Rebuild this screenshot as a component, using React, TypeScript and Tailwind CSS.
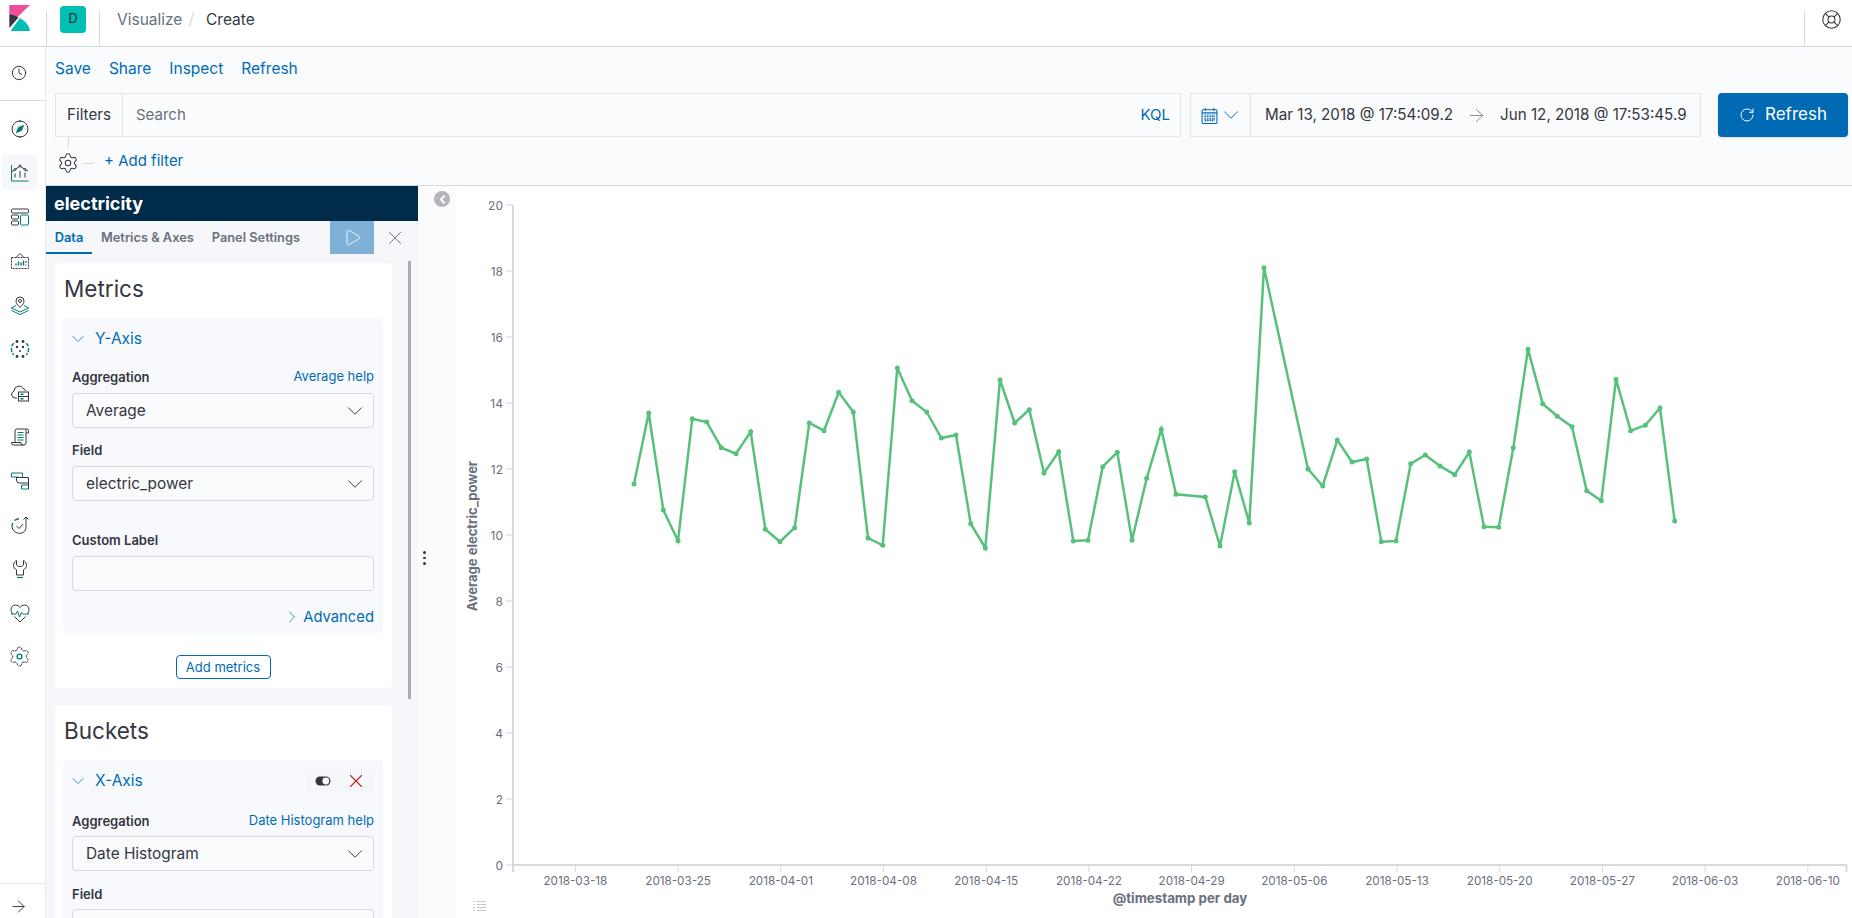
import React from "react";
import { ChevronDown, ChevronRight, ArrowRight, RotateCw, X, Play, LifeBuoy, Clock, ChevronLeft } from "lucide-react";

const D = "#343741";
const T = "#017d73";

const I = ({ children, vb = "0 0 20 20" }: { children: React.ReactNode; vb?: string }) => (
  <svg width="20" height="20" viewBox={vb} fill="none" stroke={D} strokeWidth="1">{children}</svg>
);

const gear = "M9.671 4.136a2.34 2.34 0 0 1 4.659 0 2.34 2.34 0 0 0 3.319 1.915 2.34 2.34 0 0 1 2.33 4.033 2.34 2.34 0 0 0 0 3.831 2.34 2.34 0 0 1-2.33 4.033 2.34 2.34 0 0 0-3.319 1.915 2.34 2.34 0 0 1-4.659 0 2.34 2.34 0 0 0-3.32-1.915 2.34 2.34 0 0 1-2.33-4.033 2.34 2.34 0 0 0 0-3.831A2.34 2.34 0 0 1 6.35 6.051a2.34 2.34 0 0 0 3.319-1.915";

const navIcons: React.ReactNode[] = [
  <I key="d"><circle cx="10" cy="10" r="8" /><path d="M13.5 6.5 11.5 11.5 6.5 13.5 8.5 8.5Z" fill={T} stroke={T} /><path d="M10 1v2M10 17v2" /></I>,
  <I key="v"><path d="M1.5 2v16h17" stroke={T} /><path d="M5 14.5v-4M10 14.5V8M15 14.5v-5" /><path d="M1.5 9 5 6.5 10 3l5 3.5 3 1.5" /><circle cx="10" cy="3" r="1" fill="#f5f7fa" /><circle cx="5" cy="6.5" r="1" fill="#f5f7fa" /><circle cx="15" cy="6.5" r="1" fill="#f5f7fa" /></I>,
  <I key="b"><rect x="1.5" y="2" width="17" height="4" rx="1" /><rect x="1.5" y="8" width="7" height="4" rx="1" /><rect x="1.5" y="14" width="7" height="4" rx="1" /><rect x="10.5" y="8" width="8" height="10" rx="1" stroke={T} /></I>,
  <I key="c"><path d="M1.5 6.5h17v11h-17z" strokeDasharray="2 1" /><path d="M6 6.5 10 2.5l4 4" /><path d="M6 14.5v-2M8.500 14.500v-4M11 14.500v-3M13.500 14.500v-5" stroke={T} strokeWidth="1.400" /><path d="M16 14.500v-1M16 12v-2" /></I>,
  <I key="m"><path d="M10 12.500C7 9.500 6 8 6 6a4 4 0 0 1 8 0c0 2-1 3.500-4 6.500Z" /><circle cx="10" cy="6" r="1.500" /><path d="M6 10.500 1.500 13 10 17l8.500-4L14 10.500M1.500 15.500 10 19.500l8.500-4" stroke={T} /></I>,
  <I key="ml"><g fill={D} stroke="none"><circle cx="7" cy="2.500" r="1.400" /><circle cx="13" cy="2.500" r="1.400" /><circle cx="7" cy="8" r="1.200" /><circle cx="13" cy="8" r="1.200" /><circle cx="7" cy="17.500" r="1.400" /><circle cx="13" cy="17.500" r="1.400" /><circle cx="10" cy="12" r="1" /></g><path d="M4 4.500C2 5 1.500 7 1.500 10s.5 5 2.500 5.500M16 4.500c2 .5 2.500 2.500 2.500 5.500s-.5 5-2.500 5.500" stroke={T} strokeWidth="1.400" strokeDasharray="4 1.500" /></I>,
  <I key="i"><path d="M7 15H5a3.500 3.500 0 0 1-1-6.800A5 5 0 0 1 13.500 6 4 4 0 0 1 16 8" /><rect x="8.500" y="9" width="10" height="9" /><path d="M8.500 13.500h10" /><path d="M10.500 11.200h3M10.500 15.800h3" stroke={T} strokeWidth="1.400" /></I>,
  <I key="l"><path d="M5 16V4a2 2 0 0 1 2-2h10a1.500 1.500 0 0 1 1.500 1.500V6H16M16 2.500V16a2 2 0 0 1-2 2H3.500A2 2 0 0 1 1.500 16v-.5H11v.5a2 2 0 0 0 2 2" /><path d="M7.500 5.500h6M7.500 8h6M7.500 10.500h6M7.500 13h6" stroke={T} strokeWidth="1.200" /></I>,
  <I key="a"><path d="M8.500 6H1.500V2h11v4" stroke={T} /><path d="M6.500 6.500h12v5.500h-9a3 3 0 0 1-3-3z" /><path d="M11.500 14h7v4h-7z" stroke={T} /><path d="M18.500 12v6" /></I>,
  <I key="u"><path d="M13 17.500a7.500 7.500 0 0 1-11-6.500" /><path d="M2 11c0-1 .3-2 .8-3M4.500 5.500A7 7 0 0 1 9 3.800" stroke={T} strokeWidth="1.400" /><path d="m6.500 11 2.500 2.500 4-4.500" /><path d="M13 17.500c2.500-1.500 3-3.500 3-6V2M13.500 4.500 16 2l2.500 2.500" /></I>,
  <I key="w"><path d="M6.500 1.500C4.500 2.500 3.500 4.500 3.500 6.500c0 2 1.300 3.500 3 4.300V16h7v-5.200c1.700-.8 3-2.300 3-4.300s-1-4-3-5V6l-2 1.500h-3L6.500 6Z" /><path d="M7 18.500h6" stroke={T} strokeWidth="1.200" /></I>,
  <I key="h"><path d="M2.500 11C1.500 9.500 1 8 1 6.500 1 4 3 2 5.500 2c2 0 3.500 1 4.500 2.500C11 3 12.500 2 14.500 2 17 2 19 4 19 6.500c0 1.500-.5 3-1.500 4.500M4.500 13.500 10 19l5.500-5.500" /><path d="M1 11h5l1.500-3 2 6 2-4.500 1 1.500h6.500" stroke={T} /></I>,
  <svg key="g" width="23" height="23" viewBox="0 0 24 24" fill="none" stroke={D} strokeWidth="1"><path d={gear} strokeDasharray="3.500 .6" /><circle cx="12" cy="12" r="2.500" stroke={T} strokeWidth="1.400" /></svg>,
];

const pts: [number, number][] = [
  [634,484],[648.7,413],[663.3,510],[678,540.7],[692.300,418.7],[706.7,422],[721.3,447.7],[736,453.7],[750.7,431.7],[765.3,529.3],[780,541.7],[794.7,527.7],[809.3,423],[824,430.7],[838.7,392.3],[853.3,412],[868,538],[882.7,545.3],[897.3,368],[912,400.7],[926.7,412],[941.3,438],[956,435],[970.7,523.7],[985.3,548],[1000,380],[1014.7,423],[1029.3,409.7],[1044,473],[1058.7,451.7],[1073.3,541],[1088,540.3],[1102.7,466.7],[1117.3,452.3],[1132,540.3],[1146.7,478.3],[1161.3,429.3],[1176,494.3],[1205.3,497],[1220,546],[1234.7,471.7],[1249.3,523],[1264,267.7],[1308,469],[1322.7,486],[1337.3,440],[1352,462],[1366.7,459],[1381.3,541.7],[1396,541],[1410.7,463.7],[1425.3,455],[1440,466],[1454.7,474.7],[1469.3,452],[1484,526.7],[1498.7,527.3],[1513.3,447.7],[1528,349.3],[1542.7,403.7],[1557.3,416.3],[1572,426.7],[1586.7,490.7],[1601.3,500.7],[1616,379.3],[1630.7,430.7],[1645.3,425.3],[1660,408],[1674.7,521],
];
const xLabels = ["2018-03-18","2018-03-25","2018-04-01","2018-04-08","2018-04-15","2018-04-22","2018-04-29","2018-05-06","2018-05-13","2018-05-20","2018-05-27","2018-06-03","2018-06-10"];

function Chart() {
  return (
    <svg className="block w-full h-full" viewBox="457 186 1395 732" fontFamily="Inter, sans-serif">
      {[0,2,4,6,8,10,12,14,16,18,20].map((v) => {
        const y = 865 - v * 33;
        return (
          <g key={v}>
            <line x1="506" x2="513" y1={y} y2={y} stroke="#d9d9d9" />
            <text x="503" y={y + 4.500} textAnchor="end" fontSize="12" fill="#69707d">{v}</text>
          </g>
        );
      })}
      {xLabels.map((l, i) => {
        const x = 575.4 + i * 102.7;
        return (
          <g key={l}>
            <line x1={x} x2={x} y1="865" y2="872" stroke="#d9d9d9" />
            <text x={x} y="884.500" textAnchor="middle" fontSize="11.700" fill="#69707d">{l}</text>
          </g>
        );
      })}
      <path d="M513 205v667M512 865H1847M1846.500 865v7" stroke="#d9d9d9" strokeWidth="2" fill="none" />
      <polyline points={pts.map((p) => p.join(",")).join(" ")} fill="none" stroke="#57c17b" strokeWidth="2.500" />
      {pts.map((p, i) => <circle key={i} cx={p[0]} cy={p[1]} r="2.500" fill="#57c17b" />)}
      <text x="1180" y="903" textAnchor="middle" fontSize="13.300" fontWeight="700" fill="#69707d">@timestamp per day</text>
      <text transform="translate(477 536) rotate(-90)" textAnchor="middle" fontSize="13" fontWeight="700" fill="#69707d">Average electric_power</text>
      <g stroke="#c4c7cc" strokeWidth="1">
        <path d="M473 901.500h2M473 904.500h2M473 907.500h2M473 910.500h2" />
        <path d="M477 901.500h9M477 904.500h9M477 907.500h9M477 910.500h9" />
      </g>
    </svg>
  );
}

const Sel = ({ text, className = "" }: { text: string; className?: string }) => (
  <div className={`flex items-center justify-between h-[35px] ml-[9px] mr-[9px] pl-[13px] pr-[5px] bg-[#fafbfd] border border-[#d3dae6] rounded-[4px] text-[15.400px] text-[#343741] ${className}`}>
    <span>{text}</span>
    <ChevronDown size={26} strokeWidth={0.900} color="#343741" />
  </div>
);

const Label = ({ text, help, className = "" }: { text: string; help?: string; className?: string }) => (
  <div className={`flex justify-between items-center mx-[9px] h-[16px] pt-[2px] ${className}`}>
    <span className="text-[13px] font-semibold text-[#343741]">{text}</span>
    {help && <span className="text-[13px] text-[#006bb4] -mt-[2px]">{help}</span>}
  </div>
);

export default function App() {
  return (
    <div className="h-screen w-full overflow-hidden flex flex-col bg-white font-[Inter,sans-serif] text-[#343741]">
      <header className="h-[47px] shrink-0 flex border-b border-[#d3dae6] bg-white">
        <div className="w-[46px] shrink-0 flex pl-[9px] pt-[5px]">
          <svg width="21" height="26" viewBox="0 0 21 26">
            <path d="M0.300 0H21L8 12.500Q4 9.500 0.300 9Z" fill="#f04e98" />
            <path d="M0.300 9Q5 9.500 9.500 12.500L0.300 23Z" fill="#343741" />
            <path d="M1.500 26H21C20 20 16 16 11 13Z" fill="#00bfb3" />
          </svg>
        </div>
        <div className="w-[54px] shrink-0 border-l border-r border-[#d3dae6] mt-[11px] flex justify-center relative">
          <div className="absolute left-[13px] top-[-5px] w-[26px] h-[27px] rounded-[4px] bg-[#00bfb3] flex items-center justify-center text-[12.500px] text-[#1a1c21]">D</div>
        </div>
        <div className="flex-1 flex items-start pt-[10px] pl-[17px] text-[15.500px] leading-[20px]">
          <span className="text-[#69707d]">Visualize</span>
          <span className="text-[#d3dae6] ml-[6px]">/</span>
          <span className="ml-[12px] text-[#343741]">Create</span>
        </div>
        <div className="w-[48px] shrink-0 border-l border-[#d3dae6] mt-[11px] relative">
          <LifeBuoy size={21} strokeWidth={1.200} color="#343741" className="absolute left-[16px] top-[-2px]" />
        </div>
      </header>
      <div className="flex-1 flex min-h-0">
        <aside className="w-[46px] shrink-0 flex flex-col border-r border-[#e9edf3] bg-white">
          <div className="h-[54px] shrink-0 border-b border-[#d3dae6] flex items-center pl-[11px] pb-[2px]">
            <Clock size={16} strokeWidth={1.500} color="#343741" />
          </div>
          <nav className="flex flex-col pt-[10px] pl-[2px] flex-1">
            {navIcons.map((ic, i) => (
              <div key={i} className={`w-[35px] h-[35px] mb-[9px] flex items-center justify-center rounded-[4px] ${i === 1 ? "bg-[#f5f7fa]" : ""}`}>{ic}</div>
            ))}
          </nav>
          <div className="h-[35px] shrink-0 border-t border-[#e6e9ef] flex items-center pl-[9px] pt-[10px]">
            <ArrowRight size={19} strokeWidth={1.200} color="#343741" />
          </div>
        </aside>
        <main className="flex-1 min-w-0 flex flex-col">
          <div className="h-[139px] shrink-0 bg-[#fafbfd] border-b border-[#d3dae6] flex flex-col pl-[9px] pr-[5px]">
            <div className="flex gap-[18px] h-[46px] items-center text-[15.500px] text-[#006bb4] pb-[2px]">
              <span>Save</span><span>Share</span><span>Inspect</span><span>Refresh</span>
            </div>
            <div className="flex h-[44px]">
              <div className="w-[1126px] shrink-0 flex border border-[#e3e6ec] bg-[#fbfcfd]">
                <div className="w-[67px] shrink-0 border-r border-[#e3e6ec] flex items-center justify-center text-[15.200px] bg-[#fafbfd]">Filters</div>
                <div className="flex-1 flex items-center justify-between pl-[13px] pr-[10px]">
                  <span className="text-[15px] text-[#69707d]">Search</span>
                  <span className="text-[15px] text-[#006bb4]">KQL</span>
                </div>
              </div>
              <div className="ml-[9px] w-[511px] shrink-0 flex border border-[#e3e6ec] bg-[#fafbfd]">
                <div className="w-[60px] shrink-0 border-r border-[#e3e6ec] flex items-center pl-[10px]">
                  <svg width="17" height="17" viewBox="0 0 16 16" fill="none" stroke="#006bb4" strokeWidth="1">
                    <rect x="1" y="2.500" width="14" height="13" rx="1" />
                    <path d="M1 5.500h14M4 1v2.500M12 1v2.500" />
                    <path d="M3.500 7.500h9v1.500h-9zM3.500 10.500h9v1.500h-9zM3.500 13h9" strokeDasharray="1.500 .8" />
                  </svg>
                  <ChevronDown size={26} strokeWidth={0.900} color="#006bb4" />
                </div>
                <div className="flex-1 flex items-center pl-[14px] text-[15.200px] text-[#343741] whitespace-nowrap">
                  <span>Mar 13, 2018 @ 17:54:09.2</span>
                  <ArrowRight size={21} strokeWidth={0.900} color="#69707d" className="ml-[13px] shrink-0" />
                  <span className="ml-[13px]">Jun 12, 2018 @ 17:53:45.9</span>
                </div>
              </div>
              <div className="ml-[17px] w-[130px] shrink-0 rounded-[4px] bg-[#006bb4] flex items-center pl-[21px] gap-[10px] text-white text-[17px] shadow-sm">
                <RotateCw size={16} strokeWidth={1.500} />
                <span>Refresh</span>
              </div>
            </div>
            <div className="flex items-center h-[48px] relative">
              <div className="absolute left-[13px] top-0 w-px h-[10px] bg-[#d3dae6]" />
              <svg width="22" height="22" viewBox="0 0 24 24" fill="none" stroke="#343741" strokeWidth="1.100" className="ml-[2px] mt-[4px]"><path d={gear} /><circle cx="12" cy="12" r="3" /></svg>
              <div className="w-[11px] h-px bg-[#d3dae6] ml-[4px] mt-[4px]" />
              <span className="ml-[10px] text-[15px] text-[#006bb4]">+ Add filter</span>
            </div>
          </div>
          <div className="flex-1 min-h-0 flex">
            <section className="w-[372px] shrink-0 flex flex-col bg-[#f5f7fa]">
              <div className="h-[35px] shrink-0 bg-[#002b49] text-white text-[18px] font-bold flex items-center pl-[8px]">electricity</div>
              <div className="h-[33px] shrink-0 flex text-[12.800px] font-semibold relative">
                <div className="w-[46px] text-center leading-[33px] border-b-2 border-[#006bb4] text-[#006bb4] h-[33px]">Data</div>
                <span className="ml-[9px] leading-[33px] text-[#69707d]">Metrics &amp; Axes</span>
                <span className="ml-[18px] leading-[33px] text-[#69707d]">Panel Settings</span>
                <div className="absolute left-[284px] top-0 w-[44px] h-[33px] bg-[#7fb1d8] flex items-center justify-center">
                  <Play size={19} strokeWidth={1.100} color="#fff" />
                </div>
                <X size={22} strokeWidth={1} color="#69707d" className="absolute left-[338px] top-[6px]" />
              </div>
              <div className="flex-1 min-h-0 overflow-hidden flex items-start pl-[9px] pt-[9px]">
                <div className="w-[337px] shrink-0 flex flex-col">
                  <div className="h-[425px] shrink-0 bg-white rounded-[4px] pl-[8px] pr-[9px] flex flex-col">
                    <h2 className="text-[22.500px] leading-[28px] mt-[12px] ml-[1px] text-[#343741]">Metrics</h2>
                    <div className="mt-[15px] h-[315px] shrink-0 bg-[#f8f9fc] rounded-[4px] flex flex-col">
                      <div className="flex items-center h-[40px] pl-[5px] pt-[1px]">
                        <ChevronDown size={20} strokeWidth={0.900} color="#006bb4" />
                        <span className="ml-[7px] text-[15.500px] text-[#006bb4]">Y-Axis</span>
                      </div>
                      <Label text="Aggregation" help="Average help" className="mt-[11px]" />
                      <Sel text="Average" className="mt-[8px]" />
                      <Label text="Field" className="mt-[14px]" />
                      <Sel text="electric_power" className="mt-[8px]" />
                      <Label text="Custom Label" className="mt-[31px]" />
                      <div className="h-[35px] mx-[9px] mt-[8px] bg-[#fafbfd] border border-[#d3dae6] rounded-[4px]" />
                      <div className="flex items-center justify-end mr-[9px] mt-[16px] h-[20px] gap-[1px] text-[14.800px] text-[#006bb4]">
                        <ChevronRight size={20} strokeWidth={0.900} color="#006bb4" />
                        <span>Advanced</span>
                      </div>
                    </div>
                    <div className="mt-[22px] self-center w-[95px] h-[24px] border border-[#006bb4] rounded-[4px] flex items-center justify-center text-[13px] text-[#006bb4] pt-[1px]">Add metrics</div>
                  </div>
                  <div className="mt-[17px] h-[300px] shrink-0 bg-white rounded-t-[4px] pl-[8px] pr-[9px] flex flex-col">
                    <h2 className="text-[22.500px] leading-[28px] mt-[12px] ml-[1px] text-[#343741]">Buckets</h2>
                    <div className="mt-[15px] flex-1 bg-[#f8f9fc] rounded-t-[4px] flex flex-col">
                      <div className="flex items-center h-[40px] pl-[5px] pr-[9px] pt-[1px]">
                        <ChevronDown size={20} strokeWidth={0.900} color="#006bb4" />
                        <span className="ml-[7px] text-[15.500px] text-[#006bb4]">X-Axis</span>
                        <div className="ml-auto w-[68px] h-[24px] rounded-[4px] bg-[#f5f7fa] flex items-center pl-[9px] gap-[14px]">
                          <svg width="16" height="10" viewBox="0 0 16 10"><rect x="0.500" y="0.500" width="15" height="9" rx="4.500" fill="#343741" /><circle cx="10.800" cy="5" r="3.400" fill="#f8f9fc" /></svg>
                          <X size={22} strokeWidth={1.200} color="#bd271e" />
                        </div>
                      </div>
                      <Label text="Aggregation" help="Date Histogram help" className="mt-[13px]" />
                      <Sel text="Date Histogram" className="mt-[7px]" />
                      <Label text="Field" className="mt-[15px]" />
                      <div className="h-[35px] mx-[9px] mt-[7px] bg-[#fafbfd] border border-[#d3dae6] rounded-[4px] shrink-0" />
                    </div>
                  </div>
                </div>
                <div className="w-[3px] h-[438px] shrink-0 bg-[#a9aeb5] ml-[16px] -mt-[2px]" />
              </div>
            </section>
            <div className="w-[39px] shrink-0 bg-[#fafbfd] relative">
              <div className="absolute left-[16px] top-[5px] w-[16px] h-[16px] rounded-full bg-[#b2b5ba] flex items-center justify-center">
                <ChevronLeft size={13} strokeWidth={3.500} color="#fff" />
              </div>
              <div className="absolute left-[5px] top-[365px] flex flex-col gap-[3px]">
                <span className="w-[2.500px] h-[2.500px] bg-[#343741] rounded-full" />
                <span className="w-[2.500px] h-[2.500px] bg-[#343741] rounded-full" />
                <span className="w-[2.500px] h-[2.500px] bg-[#343741] rounded-full" />
              </div>
            </div>
            <div className="flex-1 min-w-0 bg-white">
              <Chart />
            </div>
          </div>
        </main>
      </div>
    </div>
  );
}
